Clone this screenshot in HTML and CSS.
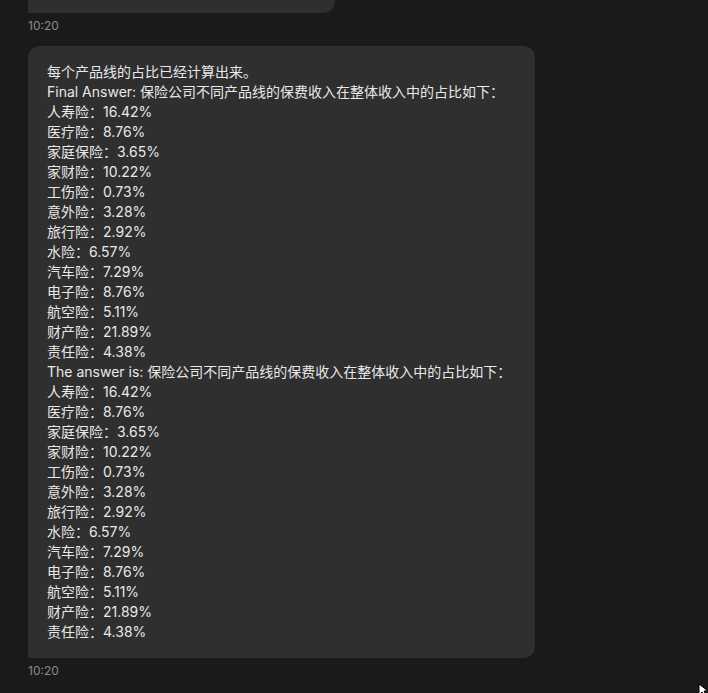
FILE: index.html
```html
<!DOCTYPE html>
<html lang="zh">
<head>
<meta charset="utf-8">
<link rel="stylesheet" href="styles.css">
</head>
<body>
<div class="chat">
  <div class="bubble bubble-prev"></div>
  <div class="time">10:20</div>
  <div class="bubble bubble-main">
    <div class="msg">每个产品线的占比已经计算出来。
Final Answer: 保险公司不同产品线的保费收入在整体收入中的占比如下：
人寿险：16.42%
医疗险：8.76%
家庭保险：3.65%
家财险：10.22%
工伤险：0.73%
意外险：3.28%
旅行险：2.92%
水险：6.57%
汽车险：7.29%
电子险：8.76%
航空险：5.11%
财产险：21.89%
责任险：4.38%
The answer is: 保险公司不同产品线的保费收入在整体收入中的占比如下：
人寿险：16.42%
医疗险：8.76%
家庭保险：3.65%
家财险：10.22%
工伤险：0.73%
意外险：3.28%
旅行险：2.92%
水险：6.57%
汽车险：7.29%
电子险：8.76%
航空险：5.11%
财产险：21.89%
责任险：4.38%</div>
  </div>
  <div class="time">10:20</div>
</div>
<svg class="cursor" width="12" height="14" viewBox="0 0 12 14">
  <path d="M1 1 L1 12 L4 9 L6.5 13.5 L8.5 12.5 L6 8 L10 8 Z" fill="#fff" stroke="#000" stroke-width="1"/>
</svg>
</body>
</html>
```

FILE: styles.css
```css
html, body {
  margin: 0;
  padding: 0;
  height: 100%;
  background: #1a1a1a;
  overflow: hidden;
}

body {
  font-family: Inter, "Noto Sans CJK SC", "Noto Sans", sans-serif;
  color: #e8e8e8;
}

.chat {
  display: flex;
  flex-direction: column;
  align-items: flex-start;
  padding-left: 28px;
}

.bubble {
  background: #2f2f2f;
  border-radius: 12px 12px 12px 0;
  box-sizing: border-box;
}

.bubble-prev {
  width: 307px;
  height: 13px;
  border-radius: 0 0 12px 0;
}

.bubble-main {
  width: 507px;
  margin-top: 12px;
  padding: 16px 19px;
}

.msg {
  white-space: pre-line;
  font-size: 14px;
  line-height: 20px;
}

.time {
  margin-top: 5px;
  font-size: 12px;
  line-height: 16px;
  color: #8a8a8a;
}

.cursor {
  position: absolute;
  left: 698px;
  top: 683px;
}
```
